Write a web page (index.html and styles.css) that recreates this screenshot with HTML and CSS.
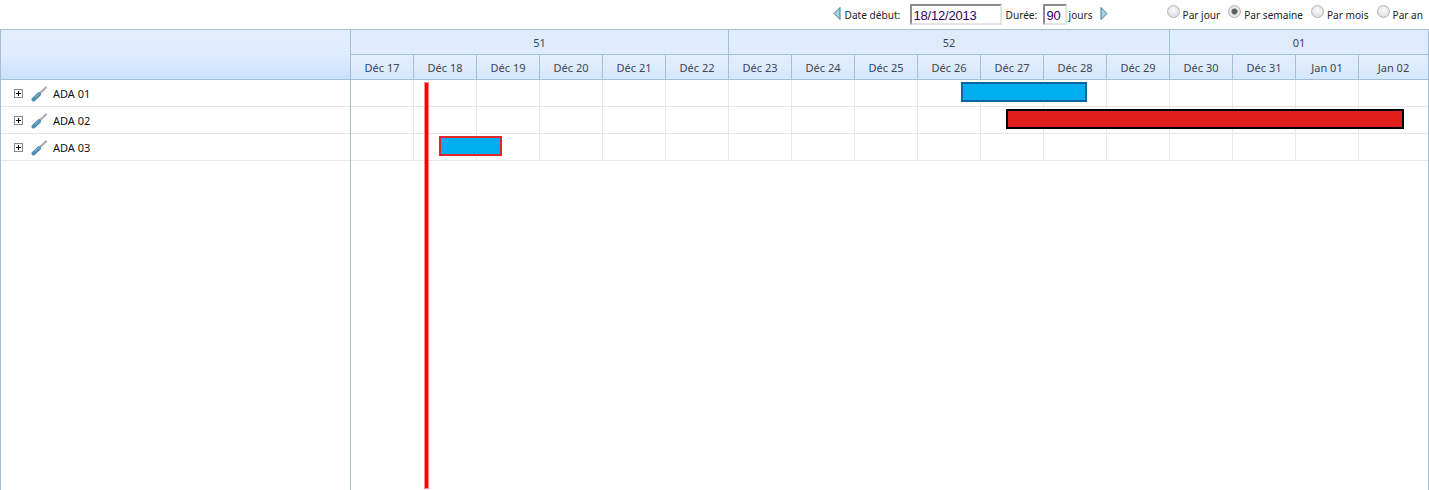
FILE: index.html
```html
<!DOCTYPE html>
<html lang="fr">
<head>
<meta charset="utf-8">
<title>Gantt</title>
<link rel="stylesheet" href="styles.css">
</head>
<body>
<div class="toolbar">
  <div class="dates">
    <svg class="arrow" width="8" height="13" viewBox="0 0 8 13"><path d="M7 .5 1 6.5l6 6z" fill="#a9d3e0" stroke="#3f7f96"/></svg>
    <label class="lbl-date">Date début:</label>
    <input class="field field-date" type="text" value="18/12/2013">
    <label class="lbl-dur">Durée:</label>
    <input class="field field-dur" type="text" value="90">
    <span class="lbl-jours">jours</span>
    <svg class="arrow arrow-next" width="8" height="13" viewBox="0 0 8 13"><path d="M1 .5l6 6-6 6z" fill="#a9d3e0" stroke="#3f7f96"/></svg>
  </div>
  <div class="scales">
    <label class="scale"><input type="radio" name="s"><span>Par jour</span></label>
    <label class="scale"><input type="radio" name="s" checked><span>Par semaine</span></label>
    <label class="scale"><input type="radio" name="s"><span>Par mois</span></label>
    <label class="scale"><input type="radio" name="s"><span>Par an</span></label>
  </div>
</div>
<div class="gantt">
  <div class="side">
    <div class="side-head"></div>
    <div class="item"><span class="plus"></span><svg class="tool" width="17" height="17" viewBox="0 0 17 17"><path d="M8.5 8.5 15 2.5" stroke="#a8acb0" stroke-width="2.2" stroke-linecap="round"/><path d="M2.5 14.5 8 9.2" stroke="#4f8fb2" stroke-width="4" stroke-linecap="round"/><path d="M4 12.2 8 8.6" stroke="#93c0d6" stroke-width="1" stroke-linecap="round"/></svg><span>ADA 01</span></div>
    <div class="item"><span class="plus"></span><svg class="tool" width="17" height="17" viewBox="0 0 17 17"><path d="M8.5 8.5 15 2.5" stroke="#a8acb0" stroke-width="2.2" stroke-linecap="round"/><path d="M2.5 14.5 8 9.2" stroke="#4f8fb2" stroke-width="4" stroke-linecap="round"/><path d="M4 12.2 8 8.6" stroke="#93c0d6" stroke-width="1" stroke-linecap="round"/></svg><span>ADA 02</span></div>
    <div class="item"><span class="plus"></span><svg class="tool" width="17" height="17" viewBox="0 0 17 17"><path d="M8.5 8.5 15 2.5" stroke="#a8acb0" stroke-width="2.2" stroke-linecap="round"/><path d="M2.5 14.5 8 9.2" stroke="#4f8fb2" stroke-width="4" stroke-linecap="round"/><path d="M4 12.2 8 8.6" stroke="#93c0d6" stroke-width="1" stroke-linecap="round"/></svg><span>ADA 03</span></div>
  </div>
  <div class="main">
    <div class="weeks">
      <div class="week w51">51</div>
      <div class="week w52">52</div>
      <div class="week w01">01</div>
    </div>
    <div class="days">
      <div class="day">Déc 17</div><div class="day">Déc 18</div><div class="day">Déc 19</div><div class="day">Déc 20</div><div class="day">Déc 21</div><div class="day">Déc 22</div><div class="day">Déc 23</div><div class="day">Déc 24</div><div class="day">Déc 25</div><div class="day">Déc 26</div><div class="day">Déc 27</div><div class="day">Déc 28</div><div class="day">Déc 29</div><div class="day">Déc 30</div><div class="day">Déc 31</div><div class="day">Jan 01</div><div class="day">Jan 02</div>
    </div>
    <div class="chart">
      <div class="row"><i></i><i></i><i></i><i></i><i></i><i></i><i></i><i></i><i></i><i></i><i></i><i></i><i></i><i></i><i></i><i></i><i></i></div>
      <div class="row"><i></i><i></i><i></i><i></i><i></i><i></i><i></i><i></i><i></i><i></i><i></i><i></i><i></i><i></i><i></i><i></i><i></i></div>
      <div class="row"><i></i><i></i><i></i><i></i><i></i><i></i><i></i><i></i><i></i><i></i><i></i><i></i><i></i><i></i><i></i><i></i><i></i></div>
      <div class="bar bar-a"></div>
      <div class="bar bar-b"></div>
      <div class="bar bar-c"></div>
      <div class="today"></div>
    </div>
  </div>
</div>
</body>
</html>
```
FILE: styles.css
```css
* { box-sizing: border-box; }
html, body { margin: 0; height: 490px; overflow: hidden; background: #fff; }
body { font: 11px "Noto Sans", sans-serif; color: #222; }

.toolbar { height: 29px; display: flex; justify-content: flex-end; padding-right: 6px; font-size: 10.1px; }
.dates { display: flex; align-items: flex-start; margin-right: 59px; height: 29px; }
.arrow { margin-top: 7px; }
.lbl-date { margin: 8px 0 0 4px; width: 65px; }
.lbl-dur { margin: 8px 0 0 4px; width: 37px; }
.lbl-jours { margin: 8px 0 0 2px; width: 31px; }
.field { height: 21px; margin-top: 4px; padding: 1px 0 0 2px; border: 2px solid #e4e4e4; border-top-color: #8c8c8c; border-left-color: #8c8c8c; font: 13px "Liberation Sans", sans-serif; letter-spacing: -.2px; color: #300060; background: #fff; outline: 0; }
.field-date { width: 92px; }
.field-dur { width: 24px; }
.scales { display: flex; }
.scale { display: flex; align-items: flex-start; margin-left: 8px; }
.scale:first-child { margin-left: 0; }
.scale span { margin-top: 8px; }
.scale input { appearance: none; width: 13px; height: 13px; margin: 5px 3px 0 0; border: 1px solid #b4b4b4; border-radius: 50%; background: radial-gradient(circle at 50% 40%, #fafafa, #d8d8d8); }
.scale input:checked { background: radial-gradient(circle, #555 0, #666 2.5px, #e4e4e4 3.5px, #eee); }

.gantt { height: 461px; display: flex; border: 1px solid #a3bfd6; border-width: 1px 1px 0; }
.side { width: 350px; flex: none; border-right: 1px solid #a3bfd6; }
.side-head { height: 50px; border-bottom: 1px solid #a3bfd6; background: linear-gradient(#e3efff, #dfecfe 50%, #c9e0fb); }
.item { height: 27px; display: flex; align-items: center; padding-left: 13px; border-bottom: 1px solid #e6e6e6; color: #111; }
.plus { width: 9px; height: 9px; margin-right: 8px; border: 1px solid #8a8a8a; background: linear-gradient(#000, #000) center / 5px 1px no-repeat, linear-gradient(#000, #000) center / 1px 5px no-repeat, #fff; }
.tool { margin-right: 5px; flex: none; }

.main { width: 1077px; }
.weeks, .days, .row { display: grid; grid-template-columns: repeat(16, 63px) 1fr; }
.weeks { height: 25px; }
.days { height: 25px; }
.week, .day { display: flex; align-items: center; justify-content: center; border-bottom: 1px solid #a3bfd6; border-right: 1px solid #a3bfd6; color: #3f4656; }
.week { background: #dfecfe; }
.day { background: linear-gradient(#e4effe, #d5e7fc); }
.day:last-child, .w01 { border-right: 0; }
.w51 { grid-column: span 6; }
.w52 { grid-column: span 7; }
.w01 { grid-column: span 4; }

.chart { position: relative; height: 410px; }
.row { height: 27px; }
.row i { border-right: 1px solid #e6e6e6; border-bottom: 1px solid #e6e6e6; }
.row i:last-child { border-right: 0; }

.bar { position: absolute; height: 20px; border: 2px solid; background: #00aeef; }
.bar-a { left: 610px; top: 2px; width: 126px; border-color: #0a65a5; }
.bar-b { left: 655px; top: 29px; width: 398px; border-color: #000; background: #e01f1c; }
.bar-c { left: 88px; top: 56px; width: 63px; border-color: #e0262c; }
.today { position: absolute; left: 74px; top: 3px; width: 3px; height: 405px; background: #f00; box-shadow: 0 0 0 1px rgba(255, 0, 0, .45); }
```
